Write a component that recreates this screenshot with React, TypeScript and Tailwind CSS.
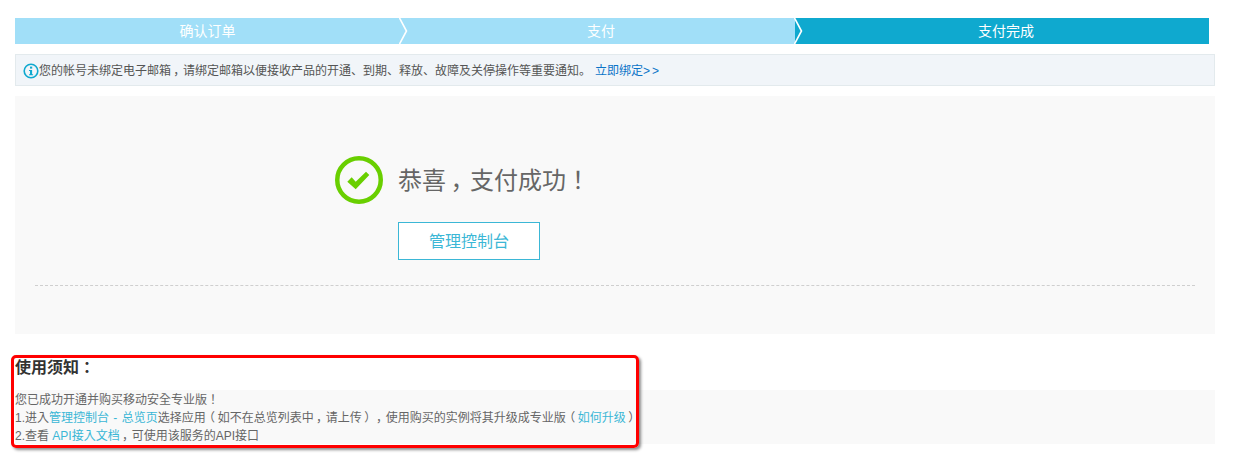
import type { ReactNode } from "react"

const cjk = "font-['Liberation_Sans','Noto_Sans_CJK_KR',sans-serif]"

// fullwidth punctuation hugs one side of its cell in this font, the original has it centred
function Punct({ children }: { children: ReactNode }) {
  return <span className="inline-block w-[1em] text-center [font-feature-settings:'palt']">{children}</span>
}

function Chevron() {
  return (
    <svg className="absolute -right-[8px] top-0 z-10 h-[26px] w-[9px]" viewBox="0 0 9 26">
      <path d="M0.5 0 L7.5 13 L0.5 26" fill="none" stroke="#fff" strokeWidth="1.6" />
    </svg>
  )
}

function InfoIcon() {
  return (
    <svg className="h-[16px] w-[16px] shrink-0" viewBox="0 0 16 16">
      <circle cx="8" cy="8" r="6.8" fill="none" stroke="#0fa9cf" strokeWidth="1.6" />
      <rect x="7" y="3.6" width="2.2" height="2" fill="#0fa9cf" />
      <path d="M6 7h3.1v4.2h1v1H6v-1h1V8H6z" fill="#0fa9cf" />
    </svg>
  )
}

function SuccessIcon() {
  return (
    <svg className="h-[48px] w-[48px] shrink-0" viewBox="0 0 48 48">
      <circle cx="24" cy="24" r="21.75" fill="none" stroke="#69cf00" strokeWidth="4.5" />
      <path d="M12.3 25.7 L16.7 21.3 L20.7 25.7 L31 15.7 L34.3 19 L20.7 33.3 Z" fill="#69cf00" />
    </svg>
  )
}

export default function App() {
  return (
    <div className={`relative min-h-[456px] w-[1241px] overflow-hidden bg-white pl-[15px] pt-[18px] [text-spacing-trim:space-all] ${cjk}`}>
      {/* Steps */}
      <div className="flex h-[26px] w-[1194px] text-center text-sm leading-[26px] text-white">
        <div className="relative w-[385px] bg-[#a1dff8]">
          确认订单
          <Chevron />
        </div>
        <div className="relative w-[395px] bg-[#a1dff8] pl-[7px]">
          支付
          <Chevron />
        </div>
        <div className="flex-1 bg-[#0fa9cf] pl-[8px]">支付完成</div>
      </div>

      {/* Notice */}
      <div className="mt-[10px] flex h-[32px] w-[1200px] items-center border border-[#e3eaed] bg-[#f1f5f9] pl-[7px] pt-[1px] text-xs text-[#555]">
        <InfoIcon />
        <span>
          您的帐号未绑定电子邮箱
          <Punct>，</Punct>
          请绑定邮箱以便接收产品的开通、到期、释放、故障及关停操作等重要通知。
        </span>
        <a className="ml-[4px] text-[#0b74c8]">
          立即绑定<span className="tracking-[2px]">&gt;&gt;</span>
        </a>
      </div>

      {/* Success panel */}
      <div className="mt-[10px] h-[238px] w-[1200px] bg-[#f9f9f9] px-[20px] pt-[60px]">
        <div className="flex h-[48px] items-center pl-[300px]">
          <SuccessIcon />
          <span className="ml-[15px] pt-[1px] text-2xl text-[#666]">
            恭喜
            <Punct>，</Punct>
            支付成功！
          </span>
        </div>
        <div className="mt-[18px] pl-[363px]">
          <button className="h-[38px] w-[142px] border border-[#3bb7d6] bg-white pt-[1px] text-base text-[#3bb7d6]">管理控制台</button>
        </div>
        <div className="mt-[25px] border-t border-dashed border-[#cfcfcf]" />
      </div>

      {/* Usage notes */}
      <h3 className="mt-[23px] text-base leading-[22px] font-bold text-[#333]">使用须知：</h3>
      <div className="mt-[11px] h-[54px] w-[1200px] bg-[#f9f9f9] pt-[1px] text-xs leading-[18px] text-[#666]">
        <p>您已成功开通并购买移动安全专业版！</p>
        <p>
          1.进入<a className="text-[#3bb7d6] [word-spacing:1px]">管理控制台 - 总览页</a>选择应用
          <Punct>（</Punct>
          如不在总览列表中
          <Punct>，</Punct>
          请上传
          <Punct>）</Punct>
          <Punct>，</Punct>
          使用购买的实例将其升级成专业版
          <Punct>（</Punct>
          <a className="text-[#3bb7d6]">如何升级</a>
          <Punct>）</Punct>
        </p>
        <p>
          2.查看 <a className="text-[#3bb7d6]">API接入文档</a>
          <Punct>，</Punct>
          可使用该服务的API接口
        </p>
      </div>

      {/* Red annotation box */}
      <div className="absolute left-[11px] top-[355px] h-[93px] w-[628px] rounded-[5px] border-[3px] border-[#f00] shadow-[2px_2px_3px_rgba(0,0,0,0.45)]" />
    </div>
  )
}
